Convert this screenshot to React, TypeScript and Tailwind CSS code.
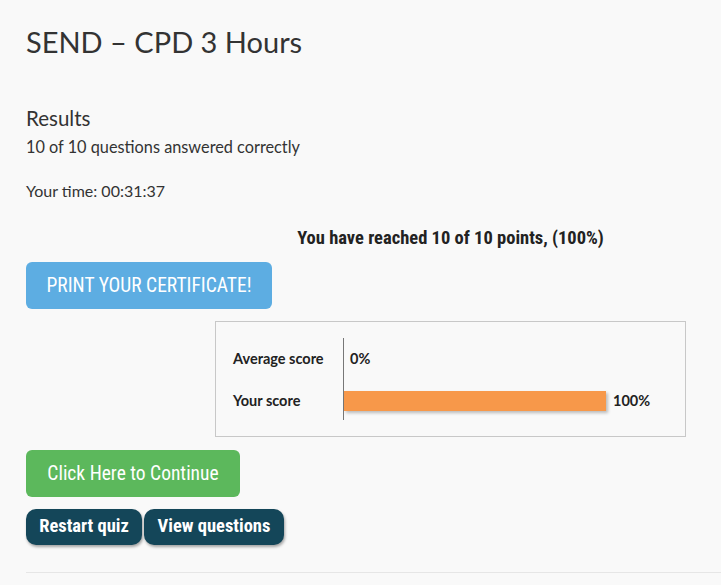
import React from "react";

const cond = "font-['Liberation_Sans_Narrow','Roboto_Condensed',Roboto,sans-serif]";

const App = () => {
  return (
    <div className="min-h-[585px] w-[721px] overflow-hidden bg-[#f9f9f9] font-['Lato','Noto_Sans',sans-serif] text-[#333]">
      <div className="w-[875px] pl-[26px] pt-[24px]">
        <h1 className="text-[29px] leading-[36px] text-[#333]">SEND – CPD 3 Hours</h1>

        <h4 className="mt-[45px] text-[20.5px] leading-[26px]">Results</h4>
        <p className="mt-[6px] text-[16.3px] leading-[20px]">10 of 10 questions answered correctly</p>
        <p className="mt-[24px] text-[16px] leading-[20px]">Your time: 00:31:37</p>

        <p className={`mt-[26px] text-center text-[18.5px] font-bold leading-[22px] text-[#222] ${cond}`}>
          You have reached 10 of 10 points, (100%)
        </p>

        <button className={`mt-[13px] h-[47px] w-[246px] rounded-[6px] bg-[#5dade2] text-[19.5px] uppercase text-white ${cond}`}>
          Print your certificate!
        </button>

        <div className="mt-[12px] flex justify-center">
          <div className="w-[471px] border border-[#c8c8c8] px-[17px] py-[16px]">
            <div className="flex">
              <div className="flex w-[110px] flex-col gap-[20px] pb-[8px] pt-[10px] text-[14.5px] font-bold text-[#222]">
                <span className="h-[22px] leading-[22px]">Average score</span>
                <span className="h-[22px] leading-[22px]">Your score</span>
              </div>
              <div className="flex flex-col gap-[20px] border-l border-[#777] pb-[8px] pt-[10px] text-[14.5px] font-bold text-[#222]">
                <div className="flex h-[22px] items-center">
                  <span className="ml-[6px]">0%</span>
                </div>
                <div className="flex h-[22px] items-center">
                  <div className="h-[20px] w-[262px] bg-[#f7984a] shadow-[2px_2px_3px_rgba(0,0,0,0.25)]" />
                  <span className="ml-[7px]">100%</span>
                </div>
              </div>
            </div>
          </div>
        </div>

        <button className={`mt-[13px] h-[47px] w-[214px] rounded-[6px] bg-[#5cb85c] text-[19.5px] text-white ${cond}`}>
          Click Here to Continue
        </button>

        <div className="mt-[12px] flex gap-[2px]">
          <button className={`h-[36px] w-[116px] rounded-[10px] bg-[#144659] text-[18.5px] font-bold text-white shadow-[1px_2px_3px_rgba(0,0,0,0.35)] ${cond}`}>
            Restart quiz
          </button>
          <button className={`h-[36px] w-[140px] rounded-[10px] bg-[#144659] text-[18.5px] font-bold text-white shadow-[1px_2px_3px_rgba(0,0,0,0.35)] ${cond}`}>
            View questions
          </button>
        </div>

        <hr className="mt-[27px] border-[#e6e6e6]" />
      </div>
    </div>
  );
};

export default App;
